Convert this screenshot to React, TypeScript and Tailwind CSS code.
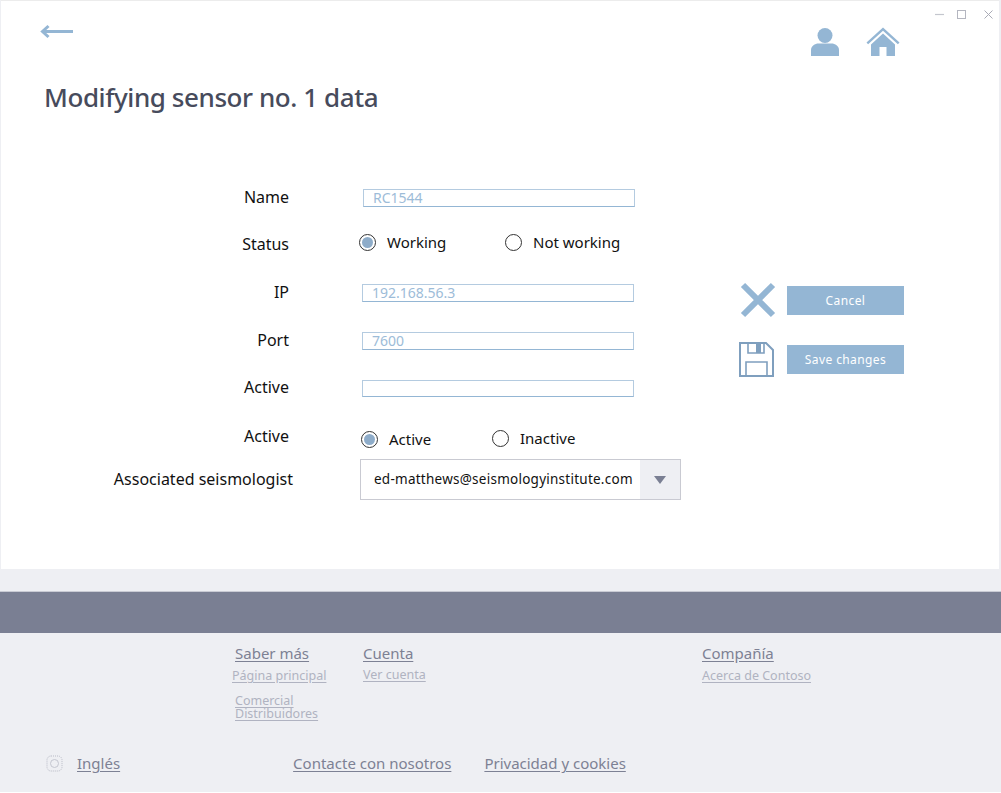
function Field({ value, h = "h-[18px]" }: { value: string; h?: string }) {
  return (
    <div className={`flex ${h} w-[272px] items-center border border-[#b4cbe0] border-b-[#94b6d4] bg-white pl-[9px] text-[14px] leading-none text-[#9dbcd8]`}>
      {value}
    </div>
  );
}

function Radio({ checked, label }: { checked?: boolean; label: string }) {
  return (
    <div className="flex items-center gap-[11px]">
      <span className="flex h-[17px] w-[17px] items-center justify-center rounded-full border border-[#333] bg-white">
        {checked && <span className="h-[11px] w-[11px] rounded-full bg-[#8eacc9]" />}
      </span>
      <span className="text-[15px] leading-none text-[#111]">{label}</span>
    </div>
  );
}

function Label({ children }: { children: string }) {
  return <div className="w-[288px] shrink-0 text-right text-[16px] leading-none text-[#111]">{children}</div>;
}

function Sub({ children }: { children: string }) {
  return <a className="block text-[12.5px] leading-[13px] text-[#b0b3c1] underline decoration-[#b0b3c1] underline-offset-2">{children}</a>;
}

function Head({ children }: { children: string }) {
  return <a className="block text-[15px] leading-5 text-[#7d8194] underline underline-offset-2">{children}</a>;
}

function Bottom({ children, className = "" }: { children: string; className?: string }) {
  return <a className={`text-[15px] leading-5 text-[#7d8194] underline underline-offset-2 ${className}`}>{children}</a>;
}

export default function App() {
  return (
    <div
      className="flex h-[793px] w-[1001px] flex-col overflow-hidden bg-[#eeeff3]"
      style={{ fontFamily: '"Noto Sans", "Open Sans", sans-serif' }}
    >
      <main className="relative ml-px mr-[2px] h-[569px] shrink-0 border-t border-[#ececec] bg-white">
        <div className="absolute right-[6px] top-[9px] flex items-center">
          <svg width="9" height="9" viewBox="0 0 9 9"><path d="M0 4.500h9" stroke="#c4c6ce" strokeWidth="1.200" /></svg>
          <svg width="9" height="9" viewBox="0 0 9 9" className="ml-[13px]"><rect x=".5" y=".5" width="8" height="8" fill="none" stroke="#b4b6c0" /></svg>
          <svg width="9" height="9" viewBox="0 0 9 9" className="ml-[18px]"><path d="M.5.5l8 8M8.500.5l-8 8" stroke="#a9abb6" /></svg>
        </div>

        <div className="flex items-start justify-between pl-[39px] pr-[99px] pt-[21px]">
          <svg width="34" height="17" viewBox="0 0 34 17" className="mt-px">
            <path d="M33 8.500H3M8.500 3 2.500 8.500l6 5.500" fill="none" stroke="#94b6d4" strokeWidth="3" />
          </svg>
          <div className="mt-[5px] flex items-center gap-[26px]">
            <svg width="30" height="30" viewBox="0 0 30 30">
              <circle cx="15" cy="8.500" r="7.500" fill="#94b6d4" />
              <path d="M1 29v-6c0-4 4-6.500 7.500-6.500h13c3.500 0 7.500 2.500 7.500 6.500v6z" fill="#94b6d4" />
            </svg>
            <svg width="34" height="30" viewBox="0 0 34 30">
              <path d="M.5 15.500 17 .5l16.500 15-1.600 1.700L17 3.700 2.100 17.200z" fill="#94b6d4" />
              <path d="M5 17.500 17 6.500l12 11V29h-8.500v-9h-7v9H5z" fill="#94b6d4" />
            </svg>
          </div>
        </div>

        <h1 className="ml-[43px] mt-[22px] text-[26px] font-medium leading-[36px] tracking-[-0.43px] text-[#474b5c]">Modifying sensor no. 1 data</h1>

        <div className="mt-[58px] flex">
          <div className="w-[738px] shrink-0">
            <div className="flex h-[48px] items-center">
              <Label>Name</Label>
              <div className="ml-[74px] mt-[2px]"><Field value="RC1544" /></div>
            </div>
            <div className="flex h-[46px] items-center">
              <Label>Status</Label>
              <div className="ml-[70px] -mt-[4px] flex">
                <div className="w-[146px]"><Radio checked label="Working" /></div>
                <Radio label="Not working" />
              </div>
            </div>
            <div className="flex h-[50px] items-center">
              <Label>IP</Label>
              <div className="ml-[73px] mt-[2px]"><Field value="192.168.56.3" /></div>
            </div>
            <div className="flex h-[46px] items-center">
              <Label>Port</Label>
              <div className="ml-[73px] mt-[2px]"><Field value="7600" /></div>
            </div>
            <div className="flex h-[48px] items-center">
              <Label>Active</Label>
              <div className="ml-[73px] mt-[3px]"><Field value="" h="h-[17px]" /></div>
            </div>
            <div className="flex h-[48px] items-center">
              <div className="mt-[2px]"><Label>Active</Label></div>
              <div className="ml-[72px] mt-[8px] flex">
                <div className="w-[131px]"><Radio checked label="Active" /></div>
                <div className="-mt-px"><Radio label="Inactive" /></div>
              </div>
            </div>
            <div className="flex h-[41px] items-center">
              <div className="mb-[2px] w-[292px] shrink-0 text-right text-[16px] leading-none text-[#111]">Associated seismologist</div>
              <div className="ml-[67px] flex h-[41px] w-[321px] items-stretch border border-[#c9cad2] bg-white">
                <div className="flex flex-1 items-center pl-[13px] text-[13.500px] tracking-[0.25px] text-[#111]">ed-matthews@seismologyinstitute.com</div>
                <div className="flex w-[40px] items-center justify-center bg-[#eeeff3]">
                  <svg width="12" height="8" viewBox="0 0 12 8"><path d="M0 0h12L6 8z" fill="#7a7f93" /></svg>
                </div>
              </div>
            </div>
          </div>

          <div className="mt-[109px] flex flex-col gap-[24px]">
            <div className="flex items-center">
              <svg width="36" height="36" viewBox="0 0 36 36" className="ml-px">
                <path d="M3 3l30 30M33 3 3 33" stroke="#94b6d4" strokeWidth="6" />
              </svg>
              <button className="ml-[11px] h-[29px] w-[117px] bg-[#94b6d4] pt-px text-[12px] tracking-[0.4px] text-white">Cancel</button>
            </div>
            <div className="flex items-center">
              <svg width="35" height="35" viewBox="0 0 35 35">
                <path d="M1 1h26l7 7v26H1z" fill="none" stroke="#7f9fbe" strokeWidth="2" />
                <path d="M9 1v10h16V1M7 34V20h21v14M7 20h21" fill="none" stroke="#7f9fbe" strokeWidth="1.600" />
                <rect x="17" y="2" width="5" height="9" fill="#7f9fbe" />
              </svg>
              <button className="ml-[13px] h-[29px] w-[117px] bg-[#94b6d4] text-[12px] tracking-[0.4px] text-white">Save changes</button>
            </div>
          </div>
        </div>
      </main>

      <div className="mt-[22px] h-[42px] shrink-0 border-t border-[#c9cbd4] bg-[#7a7f93]" />

      <footer className="flex flex-1 flex-col border-b border-white">
        <div className="flex pt-[10px]">
          <div className="ml-[232px] w-[131px]">
            <div className="ml-[3px]"><Head>Saber más</Head></div>
            <div className="mt-[6px]"><Sub>Página principal</Sub></div>
            <div className="ml-[3px] mt-[12px]"><Sub>Comercial</Sub><Sub>Distribuidores</Sub></div>
          </div>
          <div className="w-[339px]">
            <Head>Cuenta</Head>
            <div className="mt-[5px]"><Sub>Ver cuenta</Sub></div>
          </div>
          <div>
            <Head>Compañía</Head>
            <div className="mt-[6px]"><Sub>Acerca de Contoso</Sub></div>
          </div>
        </div>
        <div className="mt-[33px] flex items-center pl-[46px]">
          <svg width="17" height="17" viewBox="0 0 17 17">
            <rect x="1" y="1" width="15" height="15" rx="4" fill="none" stroke="#b9bbc6" strokeDasharray="1 1" />
            <circle cx="8.500" cy="8.500" r="4" fill="none" stroke="#c4c6d0" />
          </svg>
          <Bottom className="ml-[14px]">Inglés</Bottom>
          <Bottom className="ml-[173px]">Contacte con nosotros</Bottom>
          <Bottom className="ml-[33px]">Privacidad y cookies</Bottom>
        </div>
      </footer>
    </div>
  );
}
